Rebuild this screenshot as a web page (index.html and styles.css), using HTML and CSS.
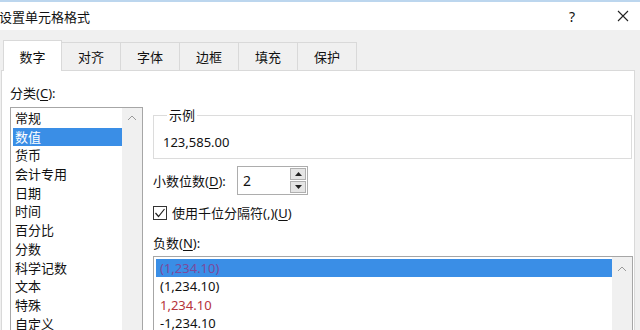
FILE: index.html
```html
<!DOCTYPE html>
<html lang="zh-CN">
<head>
    <meta charset="UTF-8">
    <title>设置单元格格式</title>
    <link rel="stylesheet" href="styles.css">
</head>
<body>

    <div class="titlebar">
        <span class="title">设置单元格格式</span>
        <span class="help">?</span>
        <svg class="close" width="12" height="12" viewBox="0 0 12 12">
            <path d="M1 1 L11 11 M11 1 L1 11" stroke="#222" stroke-width="1.1" fill="none"/>
        </svg>
    </div>

    <div class="tabs">
        <div class="tab active">数字</div>
        <div class="tab">对齐</div>
        <div class="tab">字体</div>
        <div class="tab">边框</div>
        <div class="tab">填充</div>
        <div class="tab">保护</div>
    </div>

    <div class="panel">
        <div class="category">
            <div class="label">分类(<u>C</u>):</div>
            <div class="listbox">
                <ul class="items">
                    <li>常规</li>
                    <li class="selected">数值</li>
                    <li>货币</li>
                    <li>会计专用</li>
                    <li>日期</li>
                    <li>时间</li>
                    <li>百分比</li>
                    <li>分数</li>
                    <li>科学记数</li>
                    <li>文本</li>
                    <li>特殊</li>
                    <li>自定义</li>
                </ul>
                <div class="scrollbar">
                    <svg width="10" height="6" viewBox="0 0 10 6">
                        <polyline points="1,5 5,1 9,5" stroke="#9a9a9a" stroke-width="1" fill="none"/>
                    </svg>
                </div>
            </div>
        </div>

        <div class="options">
            <fieldset class="sample">
                <legend>示例</legend>
                <div class="sample-value">123,585.00</div>
            </fieldset>

            <div class="decimal-row">
                <span class="label">小数位数(<u>D</u>):</span>
                <div class="spin">
                    <span class="spin-value">2</span>
                    <div class="spin-buttons">
                        <div class="spin-btn">
                            <svg width="7" height="4" viewBox="0 0 7 4"><polygon points="0,4 3.5,0 7,4" fill="#222"/></svg>
                        </div>
                        <div class="spin-btn">
                            <svg width="7" height="4" viewBox="0 0 7 4"><polygon points="0,0 3.5,4 7,0" fill="#222"/></svg>
                        </div>
                    </div>
                </div>
            </div>

            <div class="check-row">
                <svg class="checkbox" width="14" height="14" viewBox="0 0 14 14">
                    <rect x="0.5" y="0.5" width="13" height="13" fill="#fff" stroke="#333"/>
                    <polyline points="2.5,7 5.5,10.5 11.5,3" stroke="#222" stroke-width="1.2" fill="none"/>
                </svg>
                <span>使用千位分隔符(,)(<u>U</u>)</span>
            </div>

            <div class="label neg-label">负数(<u>N</u>):</div>
            <div class="listbox neg-list">
                <ul class="items">
                    <li class="selected neg-red-sel">(1,234.10)</li>
                    <li>(1,234.10)</li>
                    <li class="neg-red">1,234.10</li>
                    <li>-1,234.10</li>
                </ul>
                <div class="scrollbar">
                    <svg width="10" height="6" viewBox="0 0 10 6">
                        <polyline points="1,5 5,1 9,5" stroke="#9a9a9a" stroke-width="1" fill="none"/>
                    </svg>
                </div>
            </div>
        </div>
    </div>

</body>
</html>
```

FILE: styles.css
```css
body {
    margin: 0;
    width: 640px;
    height: 330px;
    overflow: hidden;
    background: #f0f0f0;
    font-family: "Noto Sans", "Noto Sans CJK SC", sans-serif;
    font-size: 13px;
    color: #111;
}
u {
    text-decoration-thickness: 1px;
    text-underline-offset: 2px;
}
.titlebar {
    height: 28px;
    border-top: 2px solid #bcd6ee;
    background: #fff;
    display: flex;
    align-items: center;
}
.title {
    margin-left: -1px;
    flex: 1;
}
.help {
    font-size: 14px;
    margin-right: 42px;
}
.close {
    margin-right: 11px;
}
.tabs {
    display: flex;
    align-items: flex-end;
    padding: 10px 0 0 3px;
    height: 40px;
    box-sizing: border-box;
    position: relative;
    z-index: 1;
}
.tab {
    height: 28px;
    line-height: 28px;
    box-sizing: border-box;
    border: 1px solid #d9d9d9;
    border-bottom: none;
    border-left: none;
    text-align: center;
    width: 59px;
}
.tab.active {
    height: 31px;
    line-height: 33px;
    background: #fff;
    border-left: 1px solid #d9d9d9;
    width: 59px;
    margin-bottom: -1px;
}
.panel {
    background: #fff;
    border: 1px solid #d9d9d9;
    margin: 0 5px 0 1px;
    height: 300px;
    padding: 13px 1px 0 8px;
    display: flex;
}
.label {
    line-height: 18px;
}
.category {
    width: 133px;
}
.category .label {
    margin-bottom: 5px;
}
.listbox {
    border: 1px solid #a6a6a6;
    display: flex;
    height: 240px;
}
.items {
    list-style: none;
    margin: 0;
    padding: 1px 0 0 2px;
    flex: 1;
}
.items li {
    line-height: 18.7px;
    height: 18.7px;
    padding-left: 2px;
}
.items li.selected {
    background: #3a8ee6;
    color: #fff;
}
.scrollbar {
    width: 20px;
    background: #f0f0f0;
    display: flex;
    justify-content: center;
    padding-top: 7px;
    box-sizing: border-box;
}
.options {
    flex: 1;
    margin-left: 10px;
    padding-top: 23px;
}
.sample {
    margin: 0 1px 0 0;
    padding: 10px 9px 7px;
    border: 1px solid #dcdcdc;
    min-width: 0;
}
.sample legend {
    line-height: 17px;
    padding: 0 2px;
    margin-left: 4px;
}
.sample-value {
    line-height: 18px;
    margin-top: -1px;
}
.decimal-row {
    display: flex;
    align-items: center;
    margin-top: 7px;
    height: 29px;
}
.decimal-row .label {
    width: 84px;
}
.spin {
    width: 71px;
    height: 29px;
    box-sizing: border-box;
    border: 1px solid #adadad;
    display: flex;
    align-items: center;
    padding: 0 1px 0 5px;
}
.spin-value {
    flex: 1;
    font-size: 14px;
}
.spin-buttons {
    display: flex;
    flex-direction: column;
    gap: 1px;
}
.spin-btn {
    width: 16px;
    height: 12px;
    box-sizing: border-box;
    background: #e5e5e5;
    border: 1px solid #b0b0b0;
    display: flex;
    align-items: center;
    justify-content: center;
}
.check-row {
    display: flex;
    align-items: center;
    margin-top: 9px;
    line-height: 18px;
}
.checkbox {
    margin-right: 5px;
}
.neg-label {
    margin-top: 12px;
}
.neg-list {
    margin-top: 4px;
    height: 80px;
}
.neg-list .items {
    padding: 2px 0 0 2px;
}
.neg-list .items li {
    height: 18.3px;
    line-height: 18.3px;
    padding-left: 4px;
}
.neg-list .scrollbar {
    padding-top: 9px;
}
.neg-red {
    color: #b5333a;
}
.items li.neg-red-sel {
    color: #7c4a9c;
}
```
